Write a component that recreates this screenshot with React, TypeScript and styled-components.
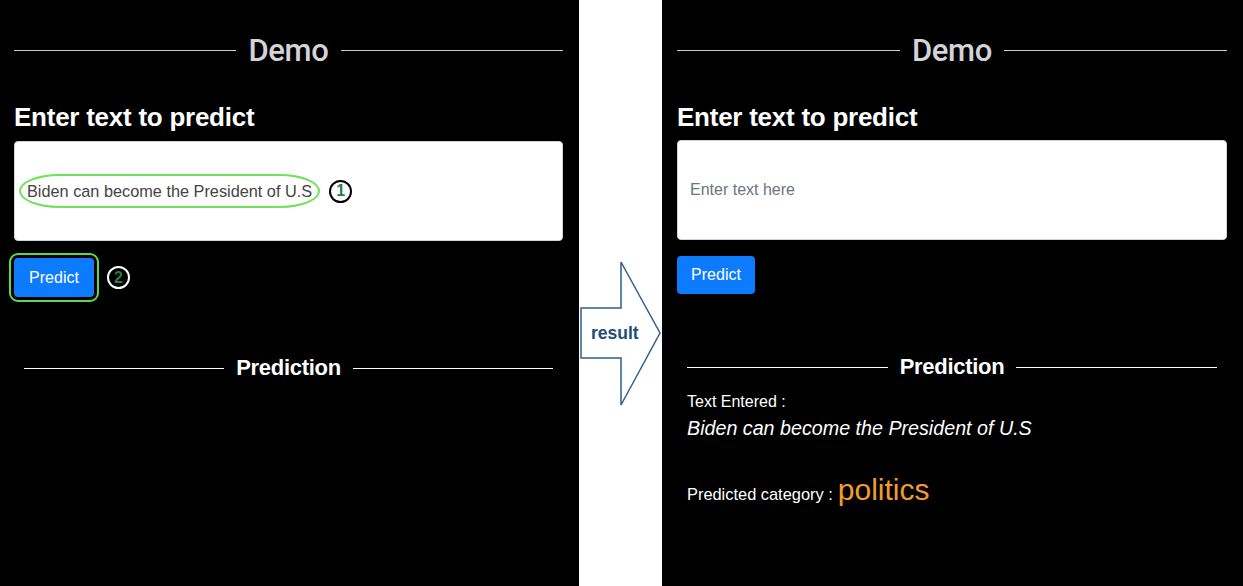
import React from "react";
import styled, { createGlobalStyle } from "styled-components";

const Global = createGlobalStyle`
  html, body { margin: 0; padding: 0; height: 100%; background: #000; }
  body { font-family: "Liberation Sans", Arial, sans-serif; }
  #root { height: 100%; }
`;

const Page = styled.div`
  display: flex;
  height: 586px;
  width: 1243px;
  overflow: hidden;
`;

const Panel = styled.section<{ $w: number; $pl: number }>`
  width: ${(p) => p.$w}px;
  flex: none;
  background: #000;
  padding: 30px 16px 0 ${(p) => p.$pl}px;
  box-sizing: border-box;
  display: flex;
  flex-direction: column;
`;

const Divider = styled.div<{ $inset?: number; $size: number; $color: string; $line: string; $weight: number; $h: number; $mt?: number; $font?: string }>`
  display: flex;
  align-items: center;
  gap: 12px;
  height: ${(p) => p.$h}px;
  margin-top: ${(p) => p.$mt ?? 0}px;
  padding: 0 ${(p) => p.$inset ?? 0}px;
  color: ${(p) => p.$color};
  font-family: ${(p) => p.$font ?? "inherit"};
  font-size: ${(p) => p.$size}px;
  font-weight: ${(p) => p.$weight};
  letter-spacing: -0.3px;
  &::before, &::after {
    content: "";
    flex: 1;
    height: 1px;
    background: ${(p) => p.$line};
  }
`;

const Heading = styled.h2`
  margin: 32px 0 0;
  font-size: 26px;
  line-height: 30px;
  font-weight: 700;
  color: #fff;
  letter-spacing: -0.25px;
`;

const TextBox = styled.div<{ $mt: number }>`
  margin-top: ${(p) => p.$mt}px;
  height: 100px;
  box-sizing: border-box;
  background: #fff;
  border: 1px solid #ced4da;
  border-radius: 4px;
  display: flex;
  align-items: center;
  padding: 0 12px;
  font-size: 16px;
  color: #495057;
`;

const Placeholder = styled.span`
  color: #6c757d;
`;

const FilledBox = styled(TextBox)`
  padding-left: 4px;
  gap: 9px;
`;

const Ellipse = styled.span`
  display: inline-flex;
  align-items: center;
  height: 34px;
  box-sizing: border-box;
  padding: 0 6px;
  border: 2px solid #6fe25a;
  border-radius: 40px / 17px;
  color: #444;
  font-size: 16.3px;
`;

const Badge = styled.span<{ $ring: string; $bg: string }>`
  display: inline-flex;
  align-items: center;
  justify-content: center;
  width: 23px;
  height: 23px;
  box-sizing: border-box;
  border: 2px solid ${(p) => p.$ring};
  background: ${(p) => p.$bg};
  border-radius: 50%;
  color: #2b7a4b;
  font-weight: 700;
  font-size: 16px;
  line-height: 1;
`;

const ButtonRow = styled.div<{ $mt: number }>`
  margin-top: ${(p) => p.$mt}px;
  display: flex;
  align-items: center;
  gap: 13px;
`;

const Button = styled.button<{ $marked?: boolean; $h: number }>`
  height: ${(p) => p.$h}px;
  padding: 0 12px;
  font-family: inherit;
  font-size: 16px;
  color: #fff;
  background: #0d7bff;
  border: none;
  border-radius: 4px;
  min-width: 78px;
  ${(p) =>
    p.$marked &&
    `outline: 2px solid #5fd94c; outline-offset: 3px; border-radius: 4px; min-width: 80px;`}
`;

const Result = styled.div`
  padding: 0 10px;
  color: #fff;
  display: flex;
  flex-direction: column;
`;

const Label = styled.div`
  margin-top: 8px;
  font-size: 16px;
  line-height: 24px;
`;

const Quote = styled.div`
  font-size: 19.7px;
  line-height: 28px;
  font-style: italic;
`;

const CategoryRow = styled.div`
  margin-top: 31px;
  display: flex;
  align-items: baseline;
  gap: 5px;
  font-size: 16.4px;
`;

const Category = styled.span`
  color: #f39c2e;
  font-size: 30px;
`;

const Middle = styled.div`
  width: 83px;
  flex: none;
  background: #fff;
  padding-top: 261px;
  box-sizing: border-box;
  display: flex;
  justify-content: center;
`;

const ArrowWrap = styled.div`
  position: relative;
  width: 83px;
  height: 146px;
`;

const ArrowLabel = styled.span`
  position: absolute;
  left: 12px;
  top: 62px;
  font-size: 17.5px;
  font-weight: 700;
  color: #1f4e79;
`;

const TITLE_FONT = `Roboto, "Liberation Sans", sans-serif`;

export default function App() {
  return (
    <Page>
      <Global />
      <Panel $w={579} $pl={14}>
        <Divider $h={40} $size={31} $weight={500} $font={TITLE_FONT} $color="#d3d3d8" $line="#c8c8c8">Demo</Divider>
        <Heading>Enter text to predict</Heading>
        <FilledBox $mt={9}>
          <Ellipse>Biden can become the President of U.S</Ellipse>
          <Badge $ring="#000" $bg="#fff">1</Badge>
        </FilledBox>
        <ButtonRow $mt={17}>
          <Button $marked $h={39}>Predict</Button>
          <Badge $ring="#fff" $bg="#000">2</Badge>
        </ButtonRow>
        <Divider $mt={56} $h={30} $inset={10} $size={22} $weight={700} $color="#fff" $line="#fff">
          Prediction
        </Divider>
      </Panel>
      <Middle>
        <ArrowWrap>
          <svg width="83" height="146" viewBox="0 0 83 146">
            <polygon
              points="2,47 42,47 42,1 81,72 42,144 42,97 2,97"
              fill="#fff"
              stroke="#2f5f8f"
              strokeWidth="1.5"
            />
          </svg>
          <ArrowLabel>result</ArrowLabel>
        </ArrowWrap>
      </Middle>
      <Panel $w={581} $pl={15}>
        <Divider $h={40} $size={31} $weight={500} $font={TITLE_FONT} $color="#d3d3d8" $line="#c8c8c8">Demo</Divider>
        <Heading>Enter text to predict</Heading>
        <TextBox $mt={8}>
          <Placeholder>Enter text here</Placeholder>
        </TextBox>
        <ButtonRow $mt={16}>
          <Button $h={38}>Predict</Button>
        </ButtonRow>
        <Divider $mt={58} $h={30} $inset={10} $size={22} $weight={700} $color="#fff" $line="#fff">
          Prediction
        </Divider>
        <Result>
          <Label>Text Entered :</Label>
          <Quote>Biden can become the President of U.S</Quote>
          <CategoryRow>
            Predicted category :<Category>politics</Category>
          </CategoryRow>
        </Result>
      </Panel>
    </Page>
  );
}
